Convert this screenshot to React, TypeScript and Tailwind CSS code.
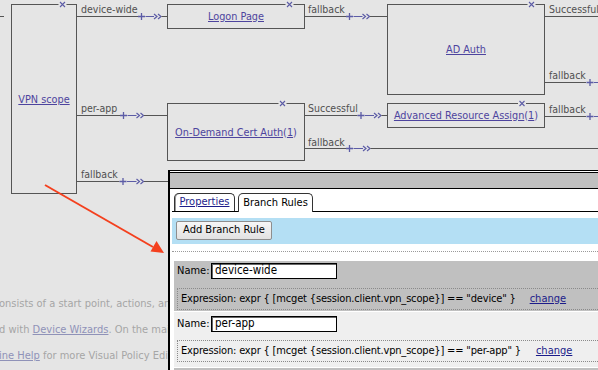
import React from "react";

const LINE = "#555555";
const BLUE = "#5c5ca6";
const BG = "#e5e5e5";

type ConnProps = { y: number; x0: number; plus: number; chev: number; x1: number };

function Conn({ y, x0, plus, chev, x1 }: ConnProps) {
  const Y = y + 0.5;
  return (
    <g>
      <line x1={x0} y1={Y} x2={plus - 3.5} y2={Y} stroke={LINE} strokeWidth={1} />
      <path
        d={`M${plus - 3.5},${Y} H${plus + 3.5} M${plus},${Y - 3.5} V${Y + 3.5}`}
        stroke={BLUE}
        strokeWidth={1.3}
        fill="none"
      />
      <line x1={plus + 4} y1={Y} x2={chev} y2={Y} stroke={BLUE} strokeWidth={1} />
      <path
        d={`M${chev},${Y - 2.5} L${chev + 3},${Y} L${chev},${Y + 2.5} M${chev + 4},${Y - 2.5} L${chev + 7},${Y} L${chev + 4},${Y + 2.5}`}
        stroke={BLUE}
        strokeWidth={1.2}
        fill="none"
      />
      <line x1={chev + 7.5} y1={Y} x2={x1} y2={Y} stroke={LINE} strokeWidth={1} />
    </g>
  );
}

function X({ cx, cy }: { cx: number; cy: number }) {
  return (
    <g>
      <rect x={cx - 4} y={cy - 1} width={8} height={2} fill={BG} />
      <path
        d={`M${cx - 2.5},${cy - 2.5} L${cx + 2.5},${cy + 2.5} M${cx + 2.5},${cy - 2.5} L${cx - 2.5},${cy + 2.5}`}
        stroke={BLUE}
        strokeWidth={1.1}
        fill="none"
      />
    </g>
  );
}

const linkCls = "text-[#4d449e] underline underline-offset-[1px]";

function Label({ x, y, text }: { x: number; y: number; text: string }) {
  return (
    <div
      className="absolute text-[10.5px] leading-[13px] text-[#505050] whitespace-nowrap"
      style={{ left: x, top: y - 13 }}
    >
      {text}
    </div>
  );
}

function Node({
  x,
  y,
  w,
  h,
  children,
}: {
  x: number;
  y: number;
  w: number;
  h: number;
  children: React.ReactNode;
}) {
  return (
    <div
      className="absolute flex items-center justify-center border border-[#555] text-[10.8px] leading-[13px] whitespace-nowrap"
      style={{ left: x, top: y, width: w, height: h }}
    >
      {children}
    </div>
  );
}

function Section({
  bg,
  pt,
  gap,
  pb,
  name,
  expr,
  changeMl,
}: {
  bg: string;
  pt: string;
  gap: string;
  pb: string;
  name: string;
  expr: string;
  changeMl: string;
}) {
  return (
    <div className={`${bg} ${pt} ${pb} pl-[3px]`}>
      <div className="flex h-[16px] items-center">
        <span className="w-[34px] text-[11px] text-black">Name:</span>
        <div className="flex h-[16px] w-[126px] items-center border border-black bg-white pl-[3px] text-[11.5px] text-black shadow-[inset_1px_1px_0_#666]">
          {name}
        </div>
      </div>
      <div
        className={`${gap} flex h-[22px] items-center whitespace-nowrap border border-dotted border-[#8a8a8a] pl-[3px] text-[11px] tracking-[-0.17px] text-black`}
      >
        <span>{expr}</span>
        <span className={`${changeMl} tracking-normal text-[#1c1c8a] underline`}>change</span>
      </div>
    </div>
  );
}

export default function App() {
  return (
    <div className="relative h-[370px] w-[598px] overflow-hidden bg-[#e5e5e5] font-['DejaVu_Sans_Condensed','Liberation_Sans',sans-serif]">
      {/* diagram canvas */}
      <div className="relative h-[291px]">
        <Node x={11} y={4} w={66} h={190}>
          <a className={linkCls}>VPN scope</a>
        </Node>
        <Node x={167} y={4} w={138} h={25}>
          <a className={linkCls}>Logon Page</a>
        </Node>
        <Node x={387} y={4} w={158} h={91}>
          <a className={linkCls}>AD Auth</a>
        </Node>
        <Node x={167} y={103} w={138} h={58}>
          <span className="text-[#4d449e]">
            <a className="underline underline-offset-[1px]">On-Demand Cert Auth</a>(
            <a className="underline underline-offset-[1px]">1</a>)
          </span>
        </Node>
        <Node x={387} y={103} w={158} h={25}>
          <span className="text-[#4d449e]">
            <a className="underline underline-offset-[1px]">Advanced Resource Assign</a>(
            <a className="underline underline-offset-[1px]">1</a>)
          </span>
        </Node>

        <Label x={81} y={16} text="device-wide" />
        <Label x={81} y={115} text="per-app" />
        <Label x={81} y={181} text="fallback" />
        <Label x={308} y={16} text="fallback" />
        <Label x={308} y={115} text="Successful" />
        <Label x={308} y={149} text="fallback" />
        <Label x={549} y={16} text="Successful" />
        <Label x={549} y={82} text="fallback" />
        <Label x={549} y={116} text="fallback" />

        <svg className="absolute left-0 top-0" width={598} height={291} viewBox="0 0 598 291">
          <line x1={0} y1={16.5} x2={4} y2={16.5} stroke={LINE} />
          <Conn y={16} x0={77} plus={141.5} chev={154} x1={167} />
          <Conn y={115} x0={77} plus={123.5} chev={136.5} x1={167} />
          <Conn y={181} x0={77} plus={123} chev={136.5} x1={170} />
          <Conn y={16} x0={305} plus={349.5} chev={362.5} x1={387} />
          <Conn y={115} x0={305} plus={361} chev={374} x1={387} />
          <Conn y={148} x0={305} plus={349.5} chev={363} x1={598} />
          <line x1={545} y1={16.5} x2={598} y2={16.5} stroke={LINE} />
          <line x1={545} y1={82.5} x2={586} y2={82.5} stroke={LINE} />
          <path d="M586.5,82.5 H593.5 M590,79 V86" stroke={BLUE} strokeWidth={1.3} fill="none" />
          <line x1={594} y1={82.5} x2={598} y2={82.5} stroke={BLUE} />
          <line x1={545} y1={116.5} x2={586} y2={116.5} stroke={LINE} />
          <path d="M586.5,116.5 H593.5 M590,113 V120" stroke={BLUE} strokeWidth={1.3} fill="none" />
          <line x1={594} y1={116.5} x2={598} y2={116.5} stroke={BLUE} />

          <X cx={62.5} cy={4.5} />
          <X cx={289.5} cy={4.5} />
          <X cx={531.5} cy={4.5} />
          <X cx={282.5} cy={103.5} />
          <X cx={522} cy={103.5} />

          {/* red annotation arrow */}
          <line x1={45} y1={185} x2={153} y2={247} stroke="#f4401e" strokeWidth={2} />
          <polygon points="164,253 150.5,251.5 156.5,241" fill="#f4401e" />
        </svg>
      </div>

      {/* underlying page text, partly hidden by the dialog */}
      <div className="w-[168px] overflow-hidden">
        <div className="-ml-[1px] whitespace-nowrap text-[11px] leading-[26px] text-[#a6a6a6]">
          <div>onsists of a start point, actions, and</div>
          <div>
            d with <span className="text-[#8f92b8] underline">Device Wizards</span>. On the main
          </div>
          <div>
            <span className="text-[#8f92b8] underline">ine Help</span> for more Visual Policy Edit
          </div>
        </div>
      </div>

      {/* dialog overlay */}
      <div className="absolute left-[168px] top-[170px] h-[210px] w-[440px] border-l-2 border-t border-black bg-white">
        <div className="mt-px h-[17px] border-y border-black bg-[#c0c0c0]" />
        <div className="ml-[2px] flex h-[23px] items-end gap-[3px] border-b border-black pl-[2px]">
          <div className="flex h-[18px] w-[61px] items-center justify-center rounded-t-[5px] border border-b-0 border-[#333] text-[11px] text-[#1c1c8a] shadow-[inset_1px_0_0_#999]">
            <span className="underline">Properties</span>
          </div>
          <div className="-mb-px flex h-[19px] w-[75px] items-center justify-center rounded-t-[5px] border border-b-0 border-[#333] bg-white text-[11px] text-black">
            Branch Rules
          </div>
        </div>
        <div className="ml-[2px] mt-[6px] h-[26px] bg-[#b4dff4] pl-[4px] pt-[3px]">
          <div className="flex h-[19px] w-[96px] items-center justify-center rounded-[2px] border border-[#8e8e8e] bg-gradient-to-b from-[#f6f6f6] to-[#e2e2e2] text-[11px] text-black">
            Add Branch Rule
          </div>
        </div>
        <div className="ml-[2px] mt-[7px] border-t border-dotted border-[#9a9a9a]" />
        <div className="ml-[4px] mt-[9px]">
          <Section
            bg="bg-[#c0c0c0]"
            pt="pt-[2px]"
            gap="mt-[9px]"
            pb="pb-[1px]"
            name="device-wide"
            expr={'Expression: expr { [mcget {session.client.vpn_scope}] == "device" }'}
            changeMl="ml-[14px]"
          />
          <div className="h-px" />
          <Section
            bg="bg-[#efefef]"
            pt="pt-[4px]"
            gap="mt-[8px]"
            pb="pb-[5px]"
            name="per-app"
            expr={'Expression: expr { [mcget {session.client.vpn_scope}] == "per-app" }'}
            changeMl="ml-[15px]"
          />
          <div className="h-px" />
          <div className="h-[20px] bg-[#c0c0c0]" />
        </div>
      </div>
    </div>
  );
}
